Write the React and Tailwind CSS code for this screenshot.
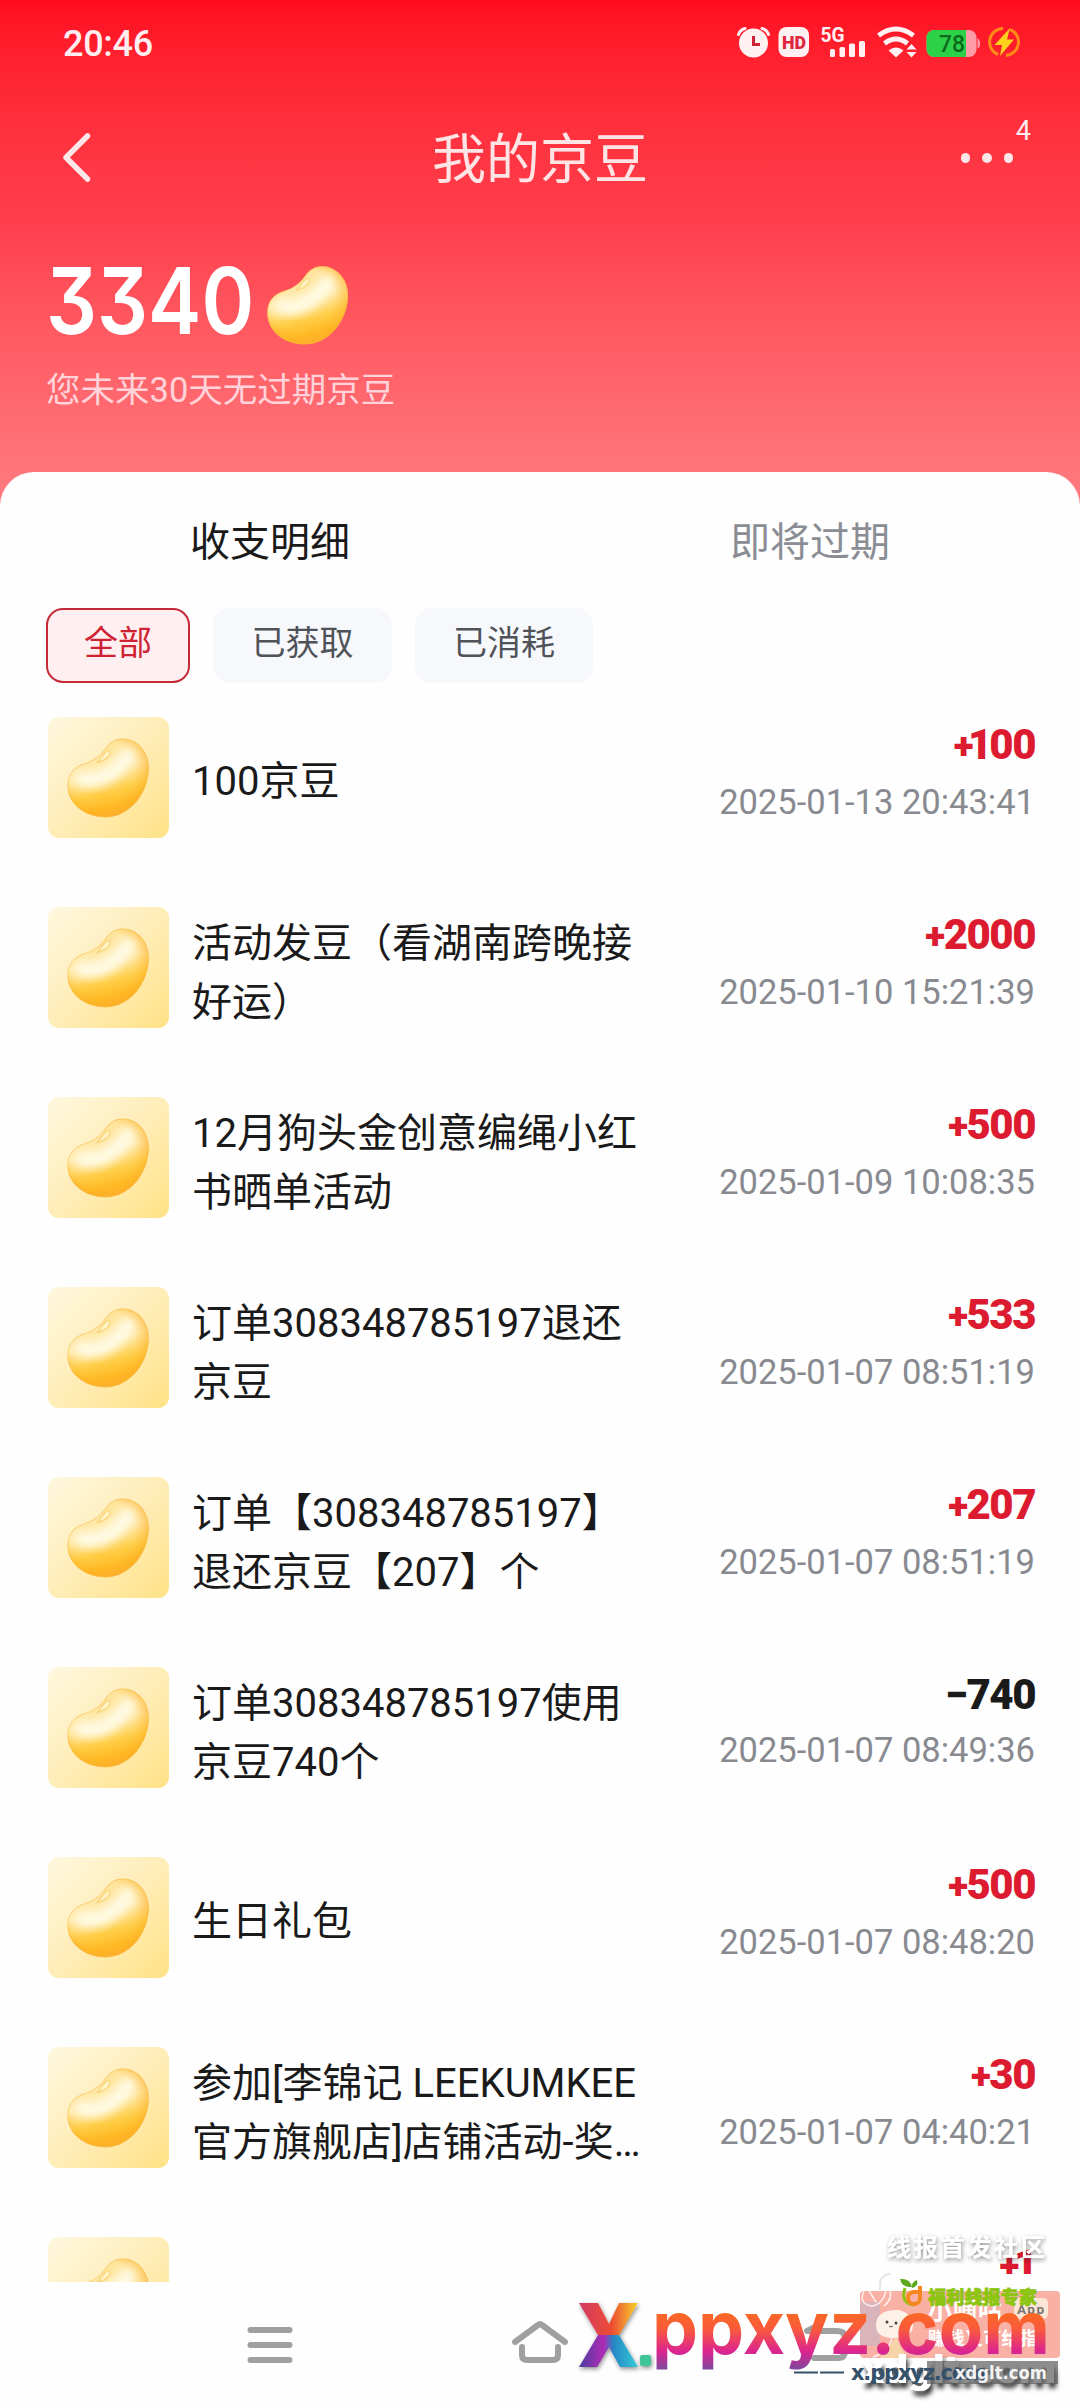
import clsx from 'clsx'

const records = [
  { lines: ['100京豆'], amount: '+100', time: '2025-01-13 20:43:41' },
  { lines: ['活动发豆（看湖南跨晚接', '好运）'], amount: '+2000', time: '2025-01-10 15:21:39' },
  { lines: ['12月狗头金创意编绳小红', '书晒单活动'], amount: '+500', time: '2025-01-09 10:08:35' },
  { lines: ['订单308348785197退还', '京豆'], amount: '+533', time: '2025-01-07 08:51:19' },
  { lines: ['订单【308348785197】', '退还京豆【207】个'], amount: '+207', time: '2025-01-07 08:51:19' },
  { lines: ['订单308348785197使用', '京豆740个'], amount: '−740', time: '2025-01-07 08:49:36' },
  { lines: ['生日礼包'], amount: '+500', time: '2025-01-07 08:48:20' },
  { lines: ['参加[李锦记 LEEKUMKEE', '官方旗舰店]店铺活动-奖…'], amount: '+30', time: '2025-01-07 04:40:21' },
  { lines: [], amount: '+1', time: '' },
]

const filters = [
  { label: '全部', width: 'w-[144px]', active: true },
  { label: '已获取', width: 'w-[179px]' },
  { label: '已消耗', width: 'w-[178px]' },
]

const BEAN =
  'M73.5 21.3C88 21 100 34 100 50C100 74 82 99.3 57 99.3C36 99.3 19.3 86 19.3 68C19.3 56 26 49 36 46C46 43 52 38 57 31C61 25 67 21.5 73.5 21.3Z'

const BeanDefs = () => (
  <svg className="absolute size-0" aria-hidden="true">
    <defs>
      <linearGradient id="beanBody" x1="0.38" y1="0.1" x2="0.62" y2="1">
        <stop offset="0" stopColor="#ffe39a" />
        <stop offset="0.35" stopColor="#ffebb0" />
        <stop offset="0.64" stopColor="#ffcd45" />
        <stop offset="0.85" stopColor="#ffb924" />
        <stop offset="1" stopColor="#fbb53c" />
      </linearGradient>
      <radialGradient id="beanEdge" cx="0.42" cy="0.42" r="0.62">
        <stop offset="0.65" stopColor="#ffb020" stopOpacity="0" />
        <stop offset="1" stopColor="#fba81c" stopOpacity="0.6" />
      </radialGradient>
      <filter id="soft" x="-50%" y="-50%" width="200%" height="200%">
        <feGaussianBlur stdDeviation="5" />
      </filter>
      <clipPath id="beanClip">
        <path d={BEAN} />
      </clipPath>
    </defs>
  </svg>
)

const Bean = ({ className }) => (
  <svg viewBox="0 0 120 120" className={className}>
    <path d={BEAN} fill="url(#beanBody)" />
    <path d={BEAN} fill="url(#beanEdge)" />
    <g clipPath="url(#beanClip)">
      <path d="M34 62C50 65 68 57 79 38" fill="none" stroke="#fffbe6" strokeWidth="15" strokeLinecap="round" filter="url(#soft)" />
      <path d={BEAN} fill="none" stroke="#f7b945" strokeWidth="1.6" strokeOpacity="0.6" />
    </g>
    <path d="M49 45C56 44 63 38 61 34C58 31 55 38 49 45Z" fill="#fff3c4" stroke="#f9d47a" strokeWidth="1.2" />
  </svg>
)

const StatusBar = () => (
  <div className="flex h-[86px] items-start justify-between pl-[63px] pr-[59px] pt-[23px]">
    <span className="text-[36px] font-medium leading-[42px] tracking-[-0.3px] text-[#ffeef0]">20:46</span>
    <svg width="286" height="38" viewBox="736 23 286 38" fill="#fff0f2">
      <circle cx="754.5" cy="43" r="14.5" />
      <path d="M739.5 34.5Q741 30 746 28.5M769.5 34.5Q768 30 763 28.5" stroke="#fff0f2" strokeWidth="3" fill="none" strokeLinecap="round" />
      <path d="M754.5 36V44.5H761" stroke="#d02236" strokeWidth="3" fill="none" />
      <rect x="779.5" y="27" width="30.5" height="30" rx="8" />
      <text x="783" y="49" fontSize="18.5" fontWeight="900" fill="#e0263c" textLength="24" lengthAdjust="spacingAndGlyphs">HD</text>
      <text x="821.5" y="41.5" fontSize="20" fontWeight="700" textLength="24" lengthAdjust="spacingAndGlyphs">5G</text>
      <rect x="831" y="49" width="5" height="8" rx="1.5" />
      <rect x="840.5" y="47" width="5.5" height="10" rx="1.5" />
      <rect x="850" y="43.5" width="6" height="13.5" rx="1.5" />
      <rect x="860" y="41" width="6" height="16" rx="1.5" />
      <path d="M879.5 35.5Q897 22.5 914.5 35.5M885.5 43.5Q897 34.5 908.5 43.5" stroke="#fff0f2" strokeWidth="5" fill="none" />
      <path d="M889.5 50.5Q897 44.5 904.5 50.5L897 57.5Z" />
      <path d="M907.5 49.5L912.5 44L917.5 49.5ZM907.5 52L912.5 57.5L917.5 52Z" />
      <rect x="927.5" y="30" width="50" height="27" rx="7.5" fill="#ff9ba6" />
      <path d="M935 30H967V57H935A7.5 7.5 0 0 1 927.5 49.5V37.5A7.5 7.5 0 0 1 935 30Z" fill="#2dd148" />
      <path d="M978.5 38.5Q981 39 981 43.5Q981 48 978.5 48.5Z" fill="#ff9ba6" />
      <text x="940" y="52" fontSize="23.5" fontWeight="500" fill="#0d6a1c" textLength="26" lengthAdjust="spacingAndGlyphs">78</text>
      <path d="M1004 28.5A13.5 13.5 0 0 0 999 54.5M1007 55.5A13.5 13.5 0 0 0 1011 29.5" stroke="#ff8a17" strokeWidth="3" fill="none" />
      <path d="M1011 28L995.5 45H1003L1001 56L1015 39.5H1008Z" fill="#ffd21c" />
    </svg>
  </div>
)

const NavBar = () => (
  <div className="grid h-[144px] grid-cols-3 items-start">
    <svg width="30" height="54" viewBox="62 130 30 54" className="ml-[62px] mt-[44px]">
      <path d="M87.5 136L66 157.5L87.5 179" fill="none" stroke="#ffe6e8" strokeWidth="5.5" strokeLinecap="round" strokeLinejoin="round" />
    </svg>
    <h1 className="mt-[43px] text-center text-[54px] font-normal leading-[64px] text-[#ffe4e6]">我的京豆</h1>
    <div className="relative mr-[67px] mt-[67px] flex justify-end gap-3">
      <i className="size-[9.5px] rounded-full bg-[#ffe6e8]" />
      <i className="size-[9.5px] rounded-full bg-[#ffe6e8]" />
      <i className="size-[9.5px] rounded-full bg-[#ffe6e8]" />
      <span className="absolute -right-[18px] -top-[38px] text-[27px] leading-8 text-[#ffeef0]">4</span>
    </div>
  </div>
)

const Amount = ({ value }) => {
  const gain = value[0] === '+'
  return (
    <p className={clsx('mt-[3px] text-[42px] font-black leading-[50px] tracking-[-1.5px]', gain ? 'text-[#dc1b30]' : 'text-[#1a1a1a]')}>
      <span className={gain ? 'text-[37px] tracking-[-1.5px]' : ''}>{value[0]}</span>
      {/* the leading 1 sits tight against the sign */}
      <span className={value[1] === '1' ? '-ml-[4px] tracking-[-3px]' : ''}>{value[1]}</span>
      {value.slice(2)}
    </p>
  )
}

const Record = ({ lines, amount, time }) => (
  <li className="flex h-[190px] items-start">
    <div className="size-[121px] shrink-0 rounded-[11px] bg-linear-to-br from-[#fff8e0] via-[#ffedb8] to-[#ffe285]">
      <Bean className="size-[121px]" />
    </div>
    <div className={clsx('ml-[23px] flex h-[120px] w-[460px] flex-col justify-center whitespace-nowrap text-[40px] leading-[59px] text-[#1a1a1a]', lines.length > 1 ? 'pt-[12px]' : 'pt-[8px]')}>
      {lines.map((line) => (
        <p key={line}>{line}</p>
      ))}
    </div>
    <div className="ml-auto whitespace-nowrap text-right">
      <Amount value={amount} />
      <p className="mt-[9px] text-[34.5px] leading-[42px] text-[#888a90]">{time}</p>
    </div>
  </li>
)

const SystemNav = () => (
  <nav className="grid h-[126px] shrink-0 grid-cols-3 bg-[#fefefe] px-[135px]">
    {[
      <path key="m" d="M10.5 21H49.5M10.5 36H49.5M10.5 51H49.5" />,
      <path key="h" d="M5 33L28 16Q30 14 32 16L55 33M12 38V46Q12 51 17 51H43Q48 51 48 46V38" />,
      <path key="b" d="M35 18L27 22H57Q65 22 65 29V42Q65 49 58 49H34" />,
    ].map((icon, i) => (
      <div key={i} className="flex justify-center">
        <svg width="60" height="72" viewBox="0 0 60 72" className="mt-[27px] overflow-visible" fill="none" stroke="#a0a0a0" strokeWidth="6" strokeLinecap="round" strokeLinejoin="round">
          {icon}
        </svg>
      </div>
    ))}
  </nav>
)

// Stacked site stamps in the bottom right corner
const Stamps = () => (
  <svg width="510" height="178" viewBox="570 2230 510 178" className="absolute bottom-0 right-0">
    <defs>
      <linearGradient id="stamp" gradientUnits="userSpaceOnUse" x1="0" y1="2312" x2="0" y2="2370">
        <stop offset="0" stopColor="#fa6a22" />
        <stop offset="0.3" stopColor="#f9593c" />
        <stop offset="0.68" stopColor="#dc2490" />
        <stop offset="1" stopColor="#7a4a9e" />
      </linearGradient>
      <linearGradient id="xTop" x1="0" y1="0" x2="1" y2="0">
        <stop offset="0" stopColor="#d13a63" />
        <stop offset="0.55" stopColor="#ee4c34" />
        <stop offset="1" stopColor="#f6d32c" />
      </linearGradient>
      <linearGradient id="xBottom" x1="0" y1="0" x2="1" y2="0">
        <stop offset="0" stopColor="#4b3da0" />
        <stop offset="0.42" stopColor="#b02bb4" />
        <stop offset="0.58" stopColor="#2786c4" />
        <stop offset="1" stopColor="#34cdd8" />
      </linearGradient>
      <filter id="drop" x="-10%" y="-30%" width="120%" height="180%">
        <feDropShadow dx="1" dy="2" stdDeviation="2" floodColor="#222" floodOpacity="0.5" />
      </filter>
      <filter id="dropDark" x="-10%" y="-30%" width="120%" height="180%">
        <feDropShadow dx="2" dy="5" stdDeviation="2.5" floodColor="#000" floodOpacity="0.85" />
      </filter>
    </defs>

    <path d="M880 2290V2285Q880 2274 891 2274H1060V2290Z" fill="#fefefe" />
    <path d="M880 2290V2285Q880 2274 891 2274" fill="none" stroke="#e9e6e6" strokeWidth="2" />
    <text x="887" y="2256" fontSize="24" fontWeight="700" fill="#fff" textLength="158" filter="url(#drop)">线报首发社区</text>

    <rect x="860" y="2291" width="200" height="67" rx="4" fill="#f9b1a6" />
    <rect x="860" y="2302" width="20" height="44" fill="#d9b4ba" />
    <g fill="none" stroke="#fff" strokeWidth="1.5" opacity="0.8">
      <path d="M864 2291Q858 2304 872 2306Q884 2304 886 2289M868 2289L876 2302M884 2306Q894 2298 889 2288" />
      <path d="M873 2357Q889 2352 892 2338M898 2342Q899 2356 912 2364" />
    </g>
    <path d="M885 2350Q893 2344 896 2336Q901 2350 908 2358H880Z" fill="#f7d3a8" />
    <path d="M876 2325C876 2313 887 2310 896 2310C908 2310 913 2320 913 2326C913 2334 905 2338 893 2338C881 2338 876 2333 876 2325Z" fill="#fdf0e6" />
    <circle cx="887" cy="2322" r="1.5" fill="#444" />
    <circle cx="896" cy="2323" r="1.5" fill="#444" />
    <path d="M889 2326Q891 2328 893 2326" stroke="#555" fill="none" />
    <text x="928" y="2319" fontSize="24" fontWeight="700" fill="#fff" textLength="74">小嘀咕</text>
    <rect x="1014" y="2298" width="34" height="21" rx="5" fill="#fbe6d6" />
    <text x="1017" y="2314" fontSize="13.5" fontWeight="700" fill="#7d7674" textLength="27">App</text>
    <text x="928" y="2345" fontSize="18" fontWeight="700" fill="#fff" textLength="110">赚钱又可给指</text>

    <text x="862" y="2383" fontSize="38" fontWeight="900" fill="#fff" textLength="194" lengthAdjust="spacingAndGlyphs" filter="url(#dropDark)">xdglt.com</text>
    <rect x="927" y="2361" width="131" height="23" fill="#5d5d5d" opacity="0.7" />
    <text x="851" y="2380" fontSize="21" fontWeight="900" fill="#34506a" textLength="136" fontFamily="DejaVu Sans">x.ppxyz.com</text>
    <text x="955" y="2379" fontSize="18" fontWeight="900" fill="#f3f3f3" textLength="92" lengthAdjust="spacingAndGlyphs" fontFamily="DejaVu Sans">xdglt.com</text>
    <path d="M794 2372.5H818M820 2372.5H844" stroke="#34506a" strokeWidth="2" />

    <g filter="url(#drop)">
      <path d="M579 2303H598L609 2324L619 2303H638L619 2335H598Z" fill="url(#xTop)" />
      <path d="M598 2335H619L638 2367H620L609 2347L597 2367H579Z" fill="url(#xBottom)" />
      <rect x="640" y="2355" width="11" height="11" rx="2" fill="#40c49a" />
    </g>
    <text x="652" y="2354" fontSize="74" fontWeight="700" fill="url(#stamp)" textLength="398" lengthAdjust="spacingAndGlyphs" fontFamily="Inter">ppxyz.com</text>

    <path d="M900 2279Q910 2278 912 2287Q902 2288 900 2279ZM912 2288Q911 2282 917 2280Q919 2286 912 2288Z" fill="#5aa81e" />
    <path d="M905 2288Q900 2303 914 2305" fill="none" stroke="#8cc414" strokeWidth="3" />
    <path d="M920 2286V2298A6 6 0 1 1 914 2292H918" fill="none" stroke="#f5871f" strokeWidth="4" />
    <text x="928" y="2304" fontSize="18" fontWeight="900" fill="#8bc510" stroke="#8bc510" strokeWidth="0.7" textLength="109">福利线报专家</text>
  </svg>
)

const App = () => (
  <div className="relative flex h-[2408px] w-[1080px] flex-col overflow-hidden bg-[#fefefe] font-[Roboto,'Noto_Sans_CJK_SC',sans-serif]">
    <BeanDefs />
    <header className="h-[510px] shrink-0 bg-linear-to-b from-[#ff0b20] via-[#ff404e] via-45% to-[#ff7c82]">
      <StatusBar />
      <NavBar />
      <div className="flex items-start pl-[46px]">
        <span className="mt-[16px] w-[202px] origin-left scale-x-[0.87] font-[Inter] text-[92px] font-semibold leading-[110px] text-white [font-feature-settings:'cv09']">3340</span>
        <Bean className="mt-[15px] size-[120px]" />
      </div>
      <p className="mt-px pl-[46px] text-[34.5px] font-normal leading-[48px] text-[#ffd3d9]">您未来30天无过期京豆</p>
    </header>

    <main className="-mt-[38px] flex h-[1810px] shrink-0 flex-col overflow-hidden rounded-t-[34px] bg-[#fefefe]">
      <div className="grid h-[136px] shrink-0 grid-cols-2 pt-[41px] text-center text-[40px] leading-[60px]">
        <span className="text-[#1a1a1a]">收支明细</span>
        <span className="text-[#8b8d94]">即将过期</span>
      </div>
      <div className="flex shrink-0 gap-[23px] pl-[46px]">
        {filters.map(({ label, width, active }) => (
          <button
            key={label}
            className={clsx(
              'flex h-[75px] items-center justify-center rounded-[17px] pb-[4px] text-[34px]',
              width,
              active ? 'border-2 border-[#c42a38] bg-[#ffeff0] text-[#cf2233]' : 'bg-[#f6f8fc] text-[#505259]'
            )}
          >
            {label}
          </button>
        ))}
      </div>
      <ul className="mt-[34px] pl-[48px] pr-[45px]">
        {records.map((record, i) => (
          <Record key={i} {...record} />
        ))}
      </ul>
    </main>

    <SystemNav />
    <Stamps />
  </div>
)

export default App
